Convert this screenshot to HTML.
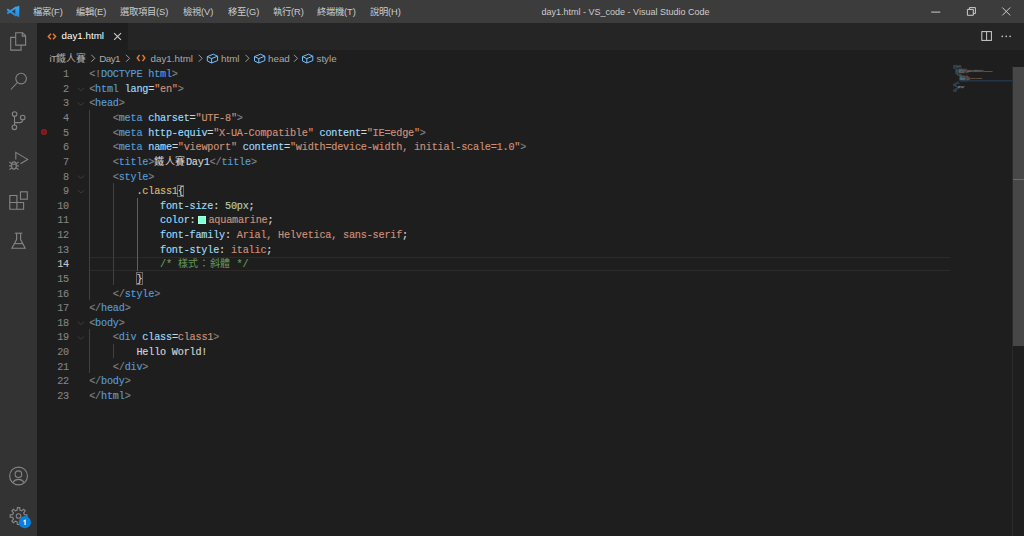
<!DOCTYPE html>
<html lang="zh-TW">
<head>
<meta charset="utf-8">
<style>
*{margin:0;padding:0;box-sizing:border-box}
html,body{width:1024px;height:536px;overflow:hidden;background:#1e1e1e;font-family:"Liberation Sans",sans-serif}
.abs{position:absolute}
#title{left:0;top:0;width:1024px;height:23px;background:#3c3c3c}
.menu{position:absolute;top:6px;font-size:9.3px;line-height:12px;color:#cccccc;white-space:pre}
#act{left:0;top:23px;width:37px;height:513px;background:#333333}
#tabs{left:37px;top:23px;width:987px;height:27.3px;background:#252526}
#tab{left:37px;top:23px;width:91px;height:27.3px;background:#1e1e1e}
.crumb{position:absolute;top:52.9px;font-size:9.8px;line-height:12px;color:#a9a9a9;white-space:pre}
.ln{position:absolute;left:40px;-webkit-text-stroke:0.1px currentColor;width:29px;text-align:right;font-family:"Liberation Mono",monospace;font-size:10.2px;letter-spacing:-0.21px;color:#858585;white-space:pre;line-height:14.62px}
.ln.act{color:#c6c6c6}
.cl{position:absolute;left:89.2px;-webkit-text-stroke:0.15px currentColor;font-family:"Liberation Mono",monospace;font-size:10.2px;letter-spacing:-0.21px;color:#d4d4d4;white-space:pre;line-height:14.62px}
.p{color:#808080}.t{color:#569cd6}.a{color:#9cdcfe}.s{color:#ce9178}.sel{color:#d7ba7d}.n{color:#b5cea8}.c{color:#6a9955}.w{color:#d4d4d4}
.g{position:absolute;width:1px;background:#404040}
.g.ga{background:#5f5f5f}
.cj{display:inline-block;width:10.6px;letter-spacing:0;-webkit-text-stroke:0;font-weight:300;font-family:"Liberation Sans",sans-serif;font-size:10px;line-height:10px}
.sw{display:inline-block;width:8.6px;height:8.6px;margin:0 2.2px 0 2.2px;background:#7fffd4;border:1px solid rgba(255,255,255,0.3);vertical-align:-1px}
svg{position:absolute;overflow:visible}
</style>
</head>
<body>
<div id="title" class="abs"></div>
<div id="act" class="abs"></div>
<div id="tabs" class="abs"></div>
<div id="tab" class="abs"></div>

<!-- menu -->
<div class="menu" style="left:33px">檔案(F)</div>
<div class="menu" style="left:76px">編輯(E)</div>
<div class="menu" style="left:120px">選取項目(S)</div>
<div class="menu" style="left:183px">檢視(V)</div>
<div class="menu" style="left:228px">移至(G)</div>
<div class="menu" style="left:273px">執行(R)</div>
<div class="menu" style="left:317px">終端機(T)</div>
<div class="menu" style="left:370px">說明(H)</div>
<div class="menu" style="left:541.5px;font-size:9px">day1.html - VS_code - Visual Studio Code</div>

<!-- tab -->
<div class="abs" style="left:61.5px;top:30.3px;font-size:9.8px;line-height:12px;color:#ffffff;white-space:pre">day1.html</div>

<!-- breadcrumbs -->
<div class="crumb" style="left:49.5px"><span style="letter-spacing:-0.6px">iT</span>鐵人賽</div>
<div class="crumb" style="left:99.3px;letter-spacing:-0.55px">Day1</div>
<div class="crumb" style="left:150.5px">day1.html</div>
<div class="crumb" style="left:221px">html</div>
<div class="crumb" style="left:268px">head</div>
<div class="crumb" style="left:316.5px">style</div>


<!-- vscode logo -->
<svg style="left:0;top:0" width="30" height="23" viewBox="0 0 30 23"><defs><linearGradient id="vg" x1="0" y1="0" x2="0" y2="1"><stop offset="0" stop-color="#3aa6f2"/><stop offset="1" stop-color="#2288dc"/></linearGradient></defs>
<path d="M15.3 7.3L18.6 5.8L19.3 6.4V16.5L18.6 17.1L15.3 15.6Z" fill="url(#vg)"/>
<path d="M16.2 7.2L7.2 13.5M16.2 15.7L7.2 9.4" stroke="url(#vg)" stroke-width="1.9" fill="none"/>
</svg>

<!-- window controls -->
<svg style="left:920px;top:0" width="104" height="23" viewBox="920 0 104 23" fill="none" stroke="#cccccc" stroke-width="1">
<path d="M931.2 12.1H940.3"/>
<path d="M967.4 9.4h5.9v5.9h-5.9z"/>
<path d="M969.4 9.4V7.6h6v6h-2.1"/>
<path d="M1002.3 7.5l7.9 7.9M1010.2 7.5l-7.9 7.9"/>
</svg>

<!-- activity bar icons -->
<svg style="left:0;top:0" width="37" height="536" viewBox="0 0 37 536" fill="none" stroke="#858585" stroke-width="1.1" stroke-linejoin="miter">
<!-- files -->
<path d="M15.7 32.7H22.6L25.6 35.8V45.1H15.7Z"/>
<path d="M22.3 32.7V36.1H25.6"/>
<path d="M15.7 37.4H10.7V50.1H21.1V45.1"/>
<!-- search -->
<circle cx="21.1" cy="78.6" r="5.3"/>
<path d="M17.4 82.5L10.9 89.5"/>
<!-- scm -->
<circle cx="14.6" cy="114.1" r="2.3"/>
<circle cx="22.7" cy="117.5" r="2.3"/>
<circle cx="14.4" cy="127.3" r="2.3"/>
<path d="M14.5 116.4V125"/>
<path d="M22.7 119.8C22.7 121.8 21.5 122.6 19.5 122.6H14.6"/>
<!-- run & debug -->
<path d="M15.8 159.5V152.4L27.6 159.4L20.5 163.7"/>
<ellipse cx="13.95" cy="165.5" rx="2.3" ry="3.6"/>
<path d="M11.7 164.2H16.2M9.4 162L11.8 163.9M18.5 162L16.1 163.9M9.1 165.9H11.6M16.3 165.9H18.8M9.4 169.6L11.8 167.8M18.5 169.6L16.1 167.8"/>
<!-- extensions -->
<path d="M9.8 195.5H16.9V202.5H23.6V209.3H9.8Z"/>
<path d="M9.8 202.5H16.9V209.3"/>
<rect x="20.5" y="191.8" width="6.8" height="7.4"/>
<!-- flask -->
<path d="M14.9 233.2H22.3"/>
<path d="M16.6 233.2V239.5L11.9 248.2H25.2L20.6 239.5V233.2"/>
<path d="M14.5 243.6H22.7"/>
<!-- account -->
<circle cx="18.55" cy="476" r="8.9"/>
<circle cx="18.4" cy="474.2" r="3.3"/>
<path d="M12.8 482.6C14.2 480.4 16.2 479.4 18.5 479.4C20.8 479.4 22.8 480.4 24.3 482.6"/>
<path d="M17.43 507.67 L19.67 507.67 L19.95 510.17 L21.68 510.88 L23.65 509.32 L25.23 510.90 L23.67 512.87 L24.38 514.60 L26.88 514.88 L26.88 517.12 L24.38 517.40 L23.67 519.13 L25.23 521.10 L23.65 522.68 L21.68 521.12 L19.95 521.83 L19.67 524.33 L17.43 524.33 L17.15 521.83 L15.42 521.12 L13.45 522.68 L11.87 521.10 L13.43 519.13 L12.72 517.40 L10.22 517.12 L10.22 514.88 L12.72 514.60 L13.43 512.87 L11.87 510.90 L13.45 509.32 L15.42 510.88 L17.15 510.17Z" stroke-width="1.2"/><circle cx="18.55" cy="516" r="2.3"/>
</svg>
<svg style="left:0;top:0" width="37" height="536" viewBox="0 0 37 536">
<circle cx="24.85" cy="522.2" r="6.1" fill="#0a80dc"/>
<path d="M23.5 521.2L25.1 520.3V525" fill="none" stroke="#ffffff" stroke-width="1.2"/>
</svg>

<!-- tab icons -->
<svg style="left:0;top:0" width="1024" height="70" viewBox="0 0 1024 70" fill="none">
<path d="M50.9 33.7L48.3 36.5L50.9 39.3M53 33.7L55.6 36.5L53 39.3" stroke="#e37933" stroke-width="1.5"/>
<path d="M114.1 33.2L121 39.8M121 33.2L114.1 39.8" stroke="#cccccc" stroke-width="1.1"/>
<!-- split editor -->
<rect x="981.8" y="31.6" width="9.6" height="8.8" stroke="#cccccc" stroke-width="1"/>
<path d="M986.6 31.6V40.4" stroke="#cccccc" stroke-width="1"/>
<circle cx="1002.3" cy="36.4" r="0.8" fill="#cccccc"/>
<circle cx="1006.2" cy="36.4" r="0.8" fill="#cccccc"/>
<circle cx="1010.1" cy="36.4" r="0.8" fill="#cccccc"/>
<!-- breadcrumb chevrons -->
<g stroke="#a9a9a9" stroke-width="0.9">
<path d="M91.3 54.8L94.8 58.3L91.3 61.8"/>
<path d="M126 54.8L129.5 58.3L126 61.8"/>
<path d="M198.7 54.8L202.2 58.3L198.7 61.8"/>
<path d="M245.5 54.8L249 58.3L245.5 61.8"/>
<path d="M294 54.8L297.5 58.3L294 61.8"/>
</g>
<path d="M139.6 54.9L137.3 58L139.6 61.1M142.5 54.9L144.8 58L142.5 61.1" stroke="#e37933" stroke-width="1.5"/>
<g stroke="#75beff" stroke-width="1" stroke-linejoin="round">
<path id="cube" d="M207.3 56.6L213.3 54.2L217.6 56.2V60.6L211.6 63L207.3 61Z M207.3 56.6L211.6 58.6L217.6 56.2 M211.6 58.6V63"/>
<use href="#cube" x="47.2"/>
<use href="#cube" x="95.2"/>
</g>
</svg>


<!-- editor decorations -->
<div class="abs" style="left:89.5px;top:256.5px;width:860px;height:14.2px;border-top:1.3px solid #2a2a2a;border-bottom:1.3px solid #2a2a2a"></div>
<div class="abs" style="left:41.1px;top:129.2px;width:6.2px;height:6.2px;border-radius:50%;background:radial-gradient(circle,#6e1414 0,#9a1e1e 70%,#8a1c1c 100%)"></div>
<svg style="left:0;top:0" width="100" height="400" viewBox="0 0 100 400" fill="none" stroke="#3e3e3e" stroke-width="0.9">
<path id="fold" d="M77.6 87.9L81 90.6L84.3 87.9"/>
<use href="#fold" y="14.62"/>
<use href="#fold" y="87.72"/>
<use href="#fold" y="102.34"/>
<use href="#fold" y="233.92"/>
<use href="#fold" y="248.54"/>
</svg>
<div class="abs" style="left:177.4px;top:184.6px;width:6.4px;height:12.8px;border:1px solid #6b6b6b"></div>
<div class="abs" style="left:136.4px;top:272.4px;width:6.4px;height:12.8px;border:1px solid #6b6b6b"></div>
<!-- scrollbar -->
<div class="abs" style="left:1012px;top:66px;width:1px;height:470px;background:#2b2b2b"></div>
<div class="abs" style="left:1012.6px;top:66.5px;width:11.4px;height:279.2px;background:#474747"></div>
<div class="abs" style="left:1012.5px;top:178.8px;width:11.5px;height:1.5px;background:#6c6c6c"></div>
<svg style="left:0;top:0" width="1024" height="120" viewBox="0 0 1024 120"><g opacity="0.42"><rect x="953.00" y="65.30" width="1.08" height="0.98" fill="#808080"/><rect x="954.08" y="65.30" width="3.78" height="0.98" fill="#569cd6"/><rect x="958.40" y="65.30" width="2.16" height="0.98" fill="#569cd6"/><rect x="960.56" y="65.30" width="0.54" height="0.98" fill="#808080"/><rect x="953.00" y="66.45" width="0.54" height="0.98" fill="#808080"/><rect x="953.54" y="66.45" width="2.16" height="0.98" fill="#569cd6"/><rect x="956.24" y="66.45" width="2.16" height="0.98" fill="#9cdcfe"/><rect x="958.40" y="66.45" width="0.54" height="0.98" fill="#d4d4d4"/><rect x="958.94" y="66.45" width="2.16" height="0.98" fill="#ce9178"/><rect x="961.10" y="66.45" width="0.54" height="0.98" fill="#808080"/><rect x="953.00" y="67.60" width="0.54" height="0.98" fill="#808080"/><rect x="953.54" y="67.60" width="2.16" height="0.98" fill="#569cd6"/><rect x="955.70" y="67.60" width="0.54" height="0.98" fill="#808080"/><rect x="955.16" y="68.75" width="0.54" height="0.98" fill="#808080"/><rect x="955.70" y="68.75" width="2.16" height="0.98" fill="#569cd6"/><rect x="958.40" y="68.75" width="3.78" height="0.98" fill="#9cdcfe"/><rect x="962.18" y="68.75" width="0.54" height="0.98" fill="#d4d4d4"/><rect x="962.72" y="68.75" width="3.78" height="0.98" fill="#ce9178"/><rect x="966.50" y="68.75" width="0.54" height="0.98" fill="#808080"/><rect x="955.16" y="69.90" width="0.54" height="0.98" fill="#808080"/><rect x="955.70" y="69.90" width="2.16" height="0.98" fill="#569cd6"/><rect x="958.40" y="69.90" width="5.40" height="0.98" fill="#9cdcfe"/><rect x="963.80" y="69.90" width="0.54" height="0.98" fill="#d4d4d4"/><rect x="964.34" y="69.90" width="9.18" height="0.98" fill="#ce9178"/><rect x="974.06" y="69.90" width="3.78" height="0.98" fill="#9cdcfe"/><rect x="977.84" y="69.90" width="0.54" height="0.98" fill="#d4d4d4"/><rect x="978.38" y="69.90" width="4.86" height="0.98" fill="#ce9178"/><rect x="983.24" y="69.90" width="0.54" height="0.98" fill="#808080"/><rect x="955.16" y="71.05" width="0.54" height="0.98" fill="#808080"/><rect x="955.70" y="71.05" width="2.16" height="0.98" fill="#569cd6"/><rect x="958.40" y="71.05" width="2.16" height="0.98" fill="#9cdcfe"/><rect x="960.56" y="71.05" width="0.54" height="0.98" fill="#d4d4d4"/><rect x="961.10" y="71.05" width="5.40" height="0.98" fill="#ce9178"/><rect x="967.04" y="71.05" width="3.78" height="0.98" fill="#9cdcfe"/><rect x="970.82" y="71.05" width="0.54" height="0.98" fill="#d4d4d4"/><rect x="971.36" y="71.05" width="10.80" height="0.98" fill="#ce9178"/><rect x="982.70" y="71.05" width="9.72" height="0.98" fill="#ce9178"/><rect x="992.42" y="71.05" width="0.54" height="0.98" fill="#808080"/><rect x="955.16" y="72.20" width="0.54" height="0.98" fill="#808080"/><rect x="955.70" y="72.20" width="2.70" height="0.98" fill="#569cd6"/><rect x="958.40" y="72.20" width="0.54" height="0.98" fill="#808080"/><rect x="958.94" y="72.20" width="3.24" height="0.98" fill="#d4d4d4"/><rect x="962.18" y="72.20" width="2.16" height="0.98" fill="#d4d4d4"/><rect x="964.34" y="72.20" width="1.08" height="0.98" fill="#808080"/><rect x="965.42" y="72.20" width="2.70" height="0.98" fill="#569cd6"/><rect x="968.12" y="72.20" width="0.54" height="0.98" fill="#808080"/><rect x="955.16" y="73.35" width="0.54" height="0.98" fill="#808080"/><rect x="955.70" y="73.35" width="2.70" height="0.98" fill="#569cd6"/><rect x="958.40" y="73.35" width="0.54" height="0.98" fill="#808080"/><rect x="957.32" y="74.50" width="3.78" height="0.98" fill="#d7ba7d"/><rect x="961.10" y="74.50" width="0.54" height="0.98" fill="#d4d4d4"/><rect x="959.48" y="75.65" width="4.86" height="0.98" fill="#9cdcfe"/><rect x="964.34" y="75.65" width="0.54" height="0.98" fill="#d4d4d4"/><rect x="965.42" y="75.65" width="2.16" height="0.98" fill="#b5cea8"/><rect x="967.58" y="75.65" width="0.54" height="0.98" fill="#d4d4d4"/><rect x="959.48" y="76.80" width="2.70" height="0.98" fill="#9cdcfe"/><rect x="962.18" y="76.80" width="0.54" height="0.98" fill="#d4d4d4"/><rect x="962.72" y="76.80" width="1.08" height="0.98" fill="#7fffd4"/><rect x="963.80" y="76.80" width="5.40" height="0.98" fill="#ce9178"/><rect x="969.20" y="76.80" width="0.54" height="0.98" fill="#d4d4d4"/><rect x="959.48" y="77.95" width="5.94" height="0.98" fill="#9cdcfe"/><rect x="965.42" y="77.95" width="0.54" height="0.98" fill="#d4d4d4"/><rect x="966.50" y="77.95" width="3.24" height="0.98" fill="#ce9178"/><rect x="970.28" y="77.95" width="5.40" height="0.98" fill="#ce9178"/><rect x="976.22" y="77.95" width="5.40" height="0.98" fill="#ce9178"/><rect x="981.62" y="77.95" width="0.54" height="0.98" fill="#d4d4d4"/><rect x="959.48" y="79.10" width="5.40" height="0.98" fill="#9cdcfe"/><rect x="964.88" y="79.10" width="0.54" height="0.98" fill="#d4d4d4"/><rect x="965.96" y="79.10" width="3.24" height="0.98" fill="#ce9178"/><rect x="969.20" y="79.10" width="0.54" height="0.98" fill="#d4d4d4"/><rect x="959.48" y="80.25" width="1.08" height="0.98" fill="#6a9955"/><rect x="961.10" y="80.25" width="5.40" height="0.98" fill="#6a9955"/><rect x="967.04" y="80.25" width="1.08" height="0.98" fill="#6a9955"/><rect x="957.32" y="81.40" width="0.54" height="0.98" fill="#d4d4d4"/><rect x="955.16" y="82.55" width="1.08" height="0.98" fill="#808080"/><rect x="956.24" y="82.55" width="2.70" height="0.98" fill="#569cd6"/><rect x="958.94" y="82.55" width="0.54" height="0.98" fill="#808080"/><rect x="953.00" y="83.70" width="1.08" height="0.98" fill="#808080"/><rect x="954.08" y="83.70" width="2.16" height="0.98" fill="#569cd6"/><rect x="956.24" y="83.70" width="0.54" height="0.98" fill="#808080"/><rect x="953.00" y="84.85" width="0.54" height="0.98" fill="#808080"/><rect x="953.54" y="84.85" width="2.16" height="0.98" fill="#569cd6"/><rect x="955.70" y="84.85" width="0.54" height="0.98" fill="#808080"/><rect x="955.16" y="86.00" width="0.54" height="0.98" fill="#808080"/><rect x="955.70" y="86.00" width="1.62" height="0.98" fill="#569cd6"/><rect x="957.86" y="86.00" width="2.70" height="0.98" fill="#9cdcfe"/><rect x="960.56" y="86.00" width="0.54" height="0.98" fill="#d4d4d4"/><rect x="961.10" y="86.00" width="3.24" height="0.98" fill="#ce9178"/><rect x="964.34" y="86.00" width="0.54" height="0.98" fill="#808080"/><rect x="957.32" y="87.15" width="2.70" height="0.98" fill="#d4d4d4"/><rect x="960.56" y="87.15" width="3.24" height="0.98" fill="#d4d4d4"/><rect x="955.16" y="88.30" width="1.08" height="0.98" fill="#808080"/><rect x="956.24" y="88.30" width="1.62" height="0.98" fill="#569cd6"/><rect x="957.86" y="88.30" width="0.54" height="0.98" fill="#808080"/><rect x="953.00" y="89.45" width="1.08" height="0.98" fill="#808080"/><rect x="954.08" y="89.45" width="2.16" height="0.98" fill="#569cd6"/><rect x="956.24" y="89.45" width="0.54" height="0.98" fill="#808080"/><rect x="953.00" y="90.60" width="1.08" height="0.98" fill="#808080"/><rect x="954.08" y="90.60" width="2.16" height="0.98" fill="#569cd6"/><rect x="956.24" y="90.60" width="0.54" height="0.98" fill="#808080"/></g><rect x="959.7" y="80.2" width="52.9" height="1.2" fill="#263b54"/></svg>
<div class="g" style="left:89.2px;top:109.86px;height:190.06px"></div>
<div class="g" style="left:112.9px;top:182.96px;height:102.34px"></div>
<div class="g ga" style="left:136.6px;top:197.58px;height:73.10px"></div>
<div class="g" style="left:89.2px;top:329.16px;height:43.86px"></div>
<div class="g" style="left:112.9px;top:343.78px;height:14.62px"></div>
<div class="ln" style="top:68.20px">1</div>
<div class="ln" style="top:82.82px">2</div>
<div class="ln" style="top:97.44px">3</div>
<div class="ln" style="top:112.06px">4</div>
<div class="ln" style="top:126.68px">5</div>
<div class="ln" style="top:141.30px">6</div>
<div class="ln" style="top:155.92px">7</div>
<div class="ln" style="top:170.54px">8</div>
<div class="ln" style="top:185.16px">9</div>
<div class="ln" style="top:199.78px">10</div>
<div class="ln" style="top:214.40px">11</div>
<div class="ln" style="top:229.02px">12</div>
<div class="ln" style="top:243.64px">13</div>
<div class="ln act" style="top:258.26px">14</div>
<div class="ln" style="top:272.88px">15</div>
<div class="ln" style="top:287.50px">16</div>
<div class="ln" style="top:302.12px">17</div>
<div class="ln" style="top:316.74px">18</div>
<div class="ln" style="top:331.36px">19</div>
<div class="ln" style="top:345.98px">20</div>
<div class="ln" style="top:360.60px">21</div>
<div class="ln" style="top:375.22px">22</div>
<div class="ln" style="top:389.84px">23</div>
<div class="cl" style="top:68.20px"><span class="p">&lt;!</span><span class="t">DOCTYPE</span><span class="w"> </span><span class="t">html</span><span class="p">&gt;</span></div>
<div class="cl" style="top:82.82px"><span class="p">&lt;</span><span class="t">html</span><span class="w"> </span><span class="a">lang</span><span class="w">=</span><span class="s">&quot;en&quot;</span><span class="p">&gt;</span></div>
<div class="cl" style="top:97.44px"><span class="p">&lt;</span><span class="t">head</span><span class="p">&gt;</span></div>
<div class="cl" style="top:112.06px"><span class="w">    </span><span class="p">&lt;</span><span class="t">meta</span><span class="w"> </span><span class="a">charset</span><span class="w">=</span><span class="s">&quot;UTF-8&quot;</span><span class="p">&gt;</span></div>
<div class="cl" style="top:126.68px"><span class="w">    </span><span class="p">&lt;</span><span class="t">meta</span><span class="w"> </span><span class="a">http-equiv</span><span class="w">=</span><span class="s">&quot;X-UA-Compatible&quot;</span><span class="w"> </span><span class="a">content</span><span class="w">=</span><span class="s">&quot;IE=edge&quot;</span><span class="p">&gt;</span></div>
<div class="cl" style="top:141.30px"><span class="w">    </span><span class="p">&lt;</span><span class="t">meta</span><span class="w"> </span><span class="a">name</span><span class="w">=</span><span class="s">&quot;viewport&quot;</span><span class="w"> </span><span class="a">content</span><span class="w">=</span><span class="s">&quot;width=device-width, initial-scale=1.0&quot;</span><span class="p">&gt;</span></div>
<div class="cl" style="top:155.92px"><span class="w">    </span><span class="p">&lt;</span><span class="t">title</span><span class="p">&gt;</span><span class="cj w">鐵</span><span class="cj w">人</span><span class="cj w">賽</span><span class="w">Day1</span><span class="p">&lt;/</span><span class="t">title</span><span class="p">&gt;</span></div>
<div class="cl" style="top:170.54px"><span class="w">    </span><span class="p">&lt;</span><span class="t">style</span><span class="p">&gt;</span></div>
<div class="cl" style="top:185.16px"><span class="w">        </span><span class="sel">.class1</span><span class="w">{</span></div>
<div class="cl" style="top:199.78px"><span class="w">            </span><span class="a">font-size</span><span class="w">: </span><span class="n">50px</span><span class="w">;</span></div>
<div class="cl" style="top:214.40px"><span class="w">            </span><span class="a">color</span><span class="w">:</span><span class="sw"></span><span class="s">aquamarine</span><span class="w">;</span></div>
<div class="cl" style="top:229.02px"><span class="w">            </span><span class="a">font-family</span><span class="w">: </span><span class="s">Arial, Helvetica, sans-serif</span><span class="w">;</span></div>
<div class="cl" style="top:243.64px"><span class="w">            </span><span class="a">font-style</span><span class="w">: </span><span class="s">italic</span><span class="w">;</span></div>
<div class="cl" style="top:258.26px"><span class="w">            </span><span class="c">/* </span><span class="cj c">樣</span><span class="cj c">式</span><span class="cj c">：</span><span class="cj c">斜</span><span class="cj c">體</span><span class="c"> */</span></div>
<div class="cl" style="top:272.88px"><span class="w">        </span><span class="w">}</span></div>
<div class="cl" style="top:287.50px"><span class="w">    </span><span class="p">&lt;/</span><span class="t">style</span><span class="p">&gt;</span></div>
<div class="cl" style="top:302.12px"><span class="p">&lt;/</span><span class="t">head</span><span class="p">&gt;</span></div>
<div class="cl" style="top:316.74px"><span class="p">&lt;</span><span class="t">body</span><span class="p">&gt;</span></div>
<div class="cl" style="top:331.36px"><span class="w">    </span><span class="p">&lt;</span><span class="t">div</span><span class="w"> </span><span class="a">class</span><span class="w">=</span><span class="s">class1</span><span class="p">&gt;</span></div>
<div class="cl" style="top:345.98px"><span class="w">        Hello World!</span></div>
<div class="cl" style="top:360.60px"><span class="w">    </span><span class="p">&lt;/</span><span class="t">div</span><span class="p">&gt;</span></div>
<div class="cl" style="top:375.22px"><span class="p">&lt;/</span><span class="t">body</span><span class="p">&gt;</span></div>
<div class="cl" style="top:389.84px"><span class="p">&lt;/</span><span class="t">html</span><span class="p">&gt;</span></div>

</body>
</html>
